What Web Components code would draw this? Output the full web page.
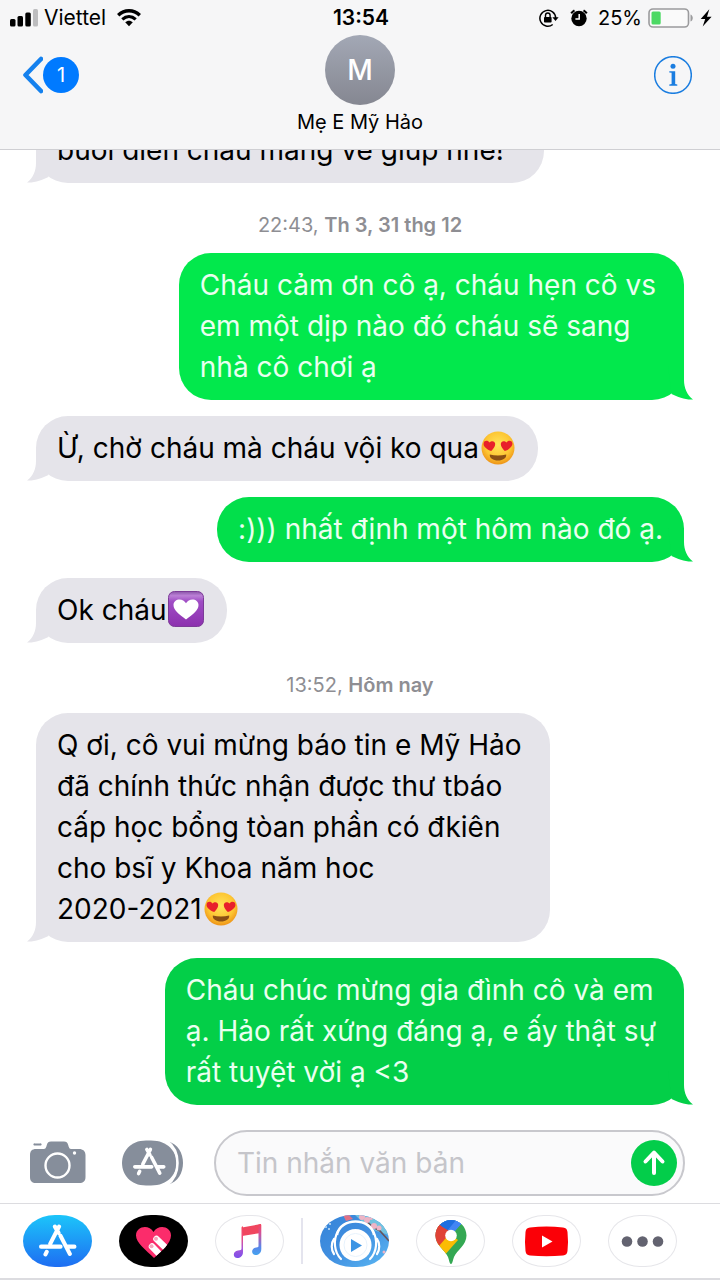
<!DOCTYPE html>
<html lang="vi">
<head>
<meta charset="utf-8">
<meta name="viewport" content="width=device-width, initial-scale=1">
<title>Mẹ E Mỹ Hảo</title>
<style>
  body { margin: 0; background: #fff; font-family: Inter, "Noto Sans", sans-serif; color: #000; }
</style>
</head>
<body>
<chat-app>
  <status-bar slot="top"></status-bar>
  <chat-header slot="top" unread="1" initial="M">Mẹ E Mỹ Hảo</chat-header>

  <message-bubble trail="wide">buổi diễn cháu mang về giúp nhé!</message-bubble>
  <time-stamp>22:43, <b>Th 3, 31 thg 12</b></time-stamp>
  <message-bubble sent tone="fresh" trail="long">Cháu cảm ơn cô ạ, cháu hẹn cô vs<br>em một dịp nào đó cháu sẽ sang<br>nhà cô chơi ạ</message-bubble>
  <message-bubble>Ừ, chờ cháu mà cháu vội ko qua<emoji-icon name="love"></emoji-icon></message-bubble>
  <message-bubble sent tone="mid">:))) nhất định một hôm nào đó ạ.</message-bubble>
  <message-bubble>Ok cháu<emoji-icon name="heart-box"></emoji-icon></message-bubble>
  <time-stamp>13:52, <b>Hôm nay</b></time-stamp>
  <message-bubble trail="long">Q ơi, cô vui mừng báo tin e Mỹ Hảo<br>đã chính thức nhận được thư tbáo<br>cấp học bổng tòan phần có đkiên<br>cho bsĩ y Khoa năm hoc<br>2020-2021<emoji-icon name="love"></emoji-icon></message-bubble>
  <message-bubble sent trail="long">Cháu chúc mừng gia đình cô và em<br>ạ. Hảo rất xứng đáng ạ, e ấy thật sự<br>rất tuyệt vời ạ &lt;3</message-bubble>

  <message-composer slot="bottom"></message-composer>
  <app-strip slot="bottom"></app-strip>
</chat-app>

<script>
const define = (name, html, setup) => {
  const template = document.createElement('template');
  template.innerHTML = html;
  customElements.define(name, class extends HTMLElement {
    constructor() {
      super();
      this.attachShadow({ mode: 'open' }).append(template.content.cloneNode(true));
    }
    connectedCallback() { if (setup) setup(this, this.shadowRoot); }
  });
};

define('chat-app', `
  <style>
    :host { display: flex; flex-direction: column; height: 100vh; }
    header { flex: none; background: #f6f6f7; border-bottom: 1px solid #cfcfd3; }
    main { flex: 1; min-height: 0; overflow: hidden; display: flex; flex-direction: column; justify-content: flex-end; gap: 16px; padding: 0 36px; }
    footer { flex: none; }
  </style>
  <header><slot name="top"></slot></header>
  <main><slot></slot></main>
  <footer><slot name="bottom"></slot></footer>
`);

define('status-bar', `
  <style>
    :host { display: grid; grid-template-columns: 1fr auto 1fr; align-items: center; height: 36px; margin-bottom: -1px; padding: 0 8px 0 10px; font-size: 20px; line-height: 24px; }
    div { display: flex; align-items: center; }
    .left { gap: 6px; }
    .left span { font-size: 21px; }
    .right { justify-content: flex-end; gap: 6px; }
    .wifi { margin-left: 5px; }
    .alarm { margin: 0 4px 0 5px; }
    time { font-size: 21px; font-weight: 600; }
    svg { display: block; flex: none; }
  </style>
  <div class="left">
    <svg width="28" height="18" viewBox="0 0 28 18"><rect y="10" width="5.500" height="7.500" rx="1.500"/><rect x="7.500" y="7" width="5.500" height="10.500" rx="1.500"/><rect x="15.300" y="3.500" width="5.500" height="14" rx="1.500"/><rect x="23" width="5" height="17.500" rx="1.500" fill="#bdbdbf"/></svg>
    <span>Viettel</span>
    <svg class="wifi" width="24" height="18" viewBox="0 0 24 18" fill="none" stroke="#000"><path d="M1.200 6.200C7.500.200 16.500.200 22.800 6.200" stroke-width="3.400"/><path d="M5.300 10.400c4-3.700 9.400-3.700 13.400 0" stroke-width="3.100"/><path d="M8.200 13.300c2.200-2.200 5.400-2.200 7.600 0L12 17.200z" fill="#000" stroke="none"/></svg>
  </div>
  <time>13:54</time>
  <div class="right">
    <svg width="20" height="18" viewBox="0 0 20 18"><path d="M13.700 15.500A7.900 7.900 0 1 1 16.700 9" fill="none" stroke="#000" stroke-width="1.500"/><path d="M13.400 8.200h6.200l-3.100 3.900z"/><rect x="5" y="8" width="7.600" height="5.600" rx=".8"/><path d="M6.500 8.500V6.300a2.300 2.300 0 0 1 4.600 0v2.200" fill="none" stroke="#000" stroke-width="1.400"/></svg>
    <svg class="alarm" width="18" height="18" viewBox="0 0 18 18"><circle cx="9" cy="9.500" r="7.700"/><path d="M1.200 4.400A10 10 0 0 1 4.500 1.300M16.800 4.400a10 10 0 0 0-3.300-3.100" fill="none" stroke="#000" stroke-width="2"/><path d="M9.200 5v5H5.400" fill="none" stroke="#fff" stroke-width="1.500"/></svg>
    <span>25%</span>
    <svg width="46" height="20" viewBox="0 0 46 20"><rect x="1" y="1" width="39.500" height="18" rx="4" fill="#fafafa" stroke="#9b9b9d" stroke-width="1.600"/><rect x="3.500" y="3.500" width="9.200" height="13" rx="1.500" fill="#4cd964"/><path d="M42.500 6.500c3 1 3 6 0 7z" fill="#9b9b9d"/></svg>
    <svg width="12" height="18" viewBox="0 0 12 18"><path d="M9.300.300L.700 9.900h4.500L2.700 17.600 11.600 7.700H7z"/></svg>
  </div>
`);

define('chat-header', `
  <style>
    :host { display: grid; grid-template-columns: 1fr auto 1fr; height: 114px; padding: 0 22px; }
    button { all: unset; height: 80px; display: flex; align-items: center; color: #0a7aff; cursor: pointer; }
    .info { justify-self: end; padding-right: 6px; }
    .badge { width: 36px; height: 36px; border-radius: 50%; background: #007aff; color: #fff; font-size: 20px; line-height: 36px; text-align: center; }
    .who { display: flex; flex-direction: column; align-items: center; }
    .avatar { width: 70px; height: 70px; border-radius: 50%; background: linear-gradient(#a3a8b5, #858791); color: #fff; font-size: 28px; font-weight: 500; line-height: 71px; text-align: center; }
    h1 { margin: 4px 0 0; font-size: 20px; font-weight: 400; line-height: 27px; }
    svg { display: block; }
  </style>
  <button type="button" aria-label="Quay lại">
    <svg width="21" height="38" viewBox="0 0 21 38"><path d="M19 3L3.500 19 19 35" fill="none" stroke="#1581ee" stroke-width="4.600" stroke-linecap="round" stroke-linejoin="round"/></svg>
    <span class="badge"></span>
  </button>
  <div class="who"><div class="avatar"></div><h1><slot></slot></h1></div>
  <button type="button" class="info" aria-label="Chi tiết">
    <svg width="38" height="38" viewBox="0 0 38 38"><circle cx="19" cy="19" r="18.300" fill="none" stroke="#1a7de0" stroke-width="1.500"/><circle cx="19" cy="10.300" r="2.500" fill="#1a7de0"/><path d="M15.300 15.200h5.900v12.700l2.100.500v1.400h-8v-1.400l2.300-.500V16.800l-2.300-.300z" fill="#1a7de0"/></svg>
  </button>
`, (host, root) => {
  root.querySelector('.badge').textContent = host.getAttribute('unread');
  root.querySelector('.avatar').textContent = host.getAttribute('initial');
});

define('time-stamp', `
  <style>
    :host { display: block; flex: none; padding: 15px 0 1px; text-align: center; color: #8e8e93; font-size: 20px; line-height: 22px; }
    ::slotted(b) { font-weight: 600; }
  </style>
  <slot></slot>
`);

define('message-bubble', `
  <style>
    :host { --fill: #e5e4ea; position: relative; flex: none; align-self: flex-start; padding: 12px 21px; border-radius: 32px; background: var(--fill); font-size: 28px; line-height: 41px; white-space: nowrap; }
    :host([sent]) { --fill: #03cf48; align-self: flex-end; color: #eafff0; }
    :host([tone="mid"]) { --fill: #02df4b; }
    :host([tone="fresh"]) { --fill: #02e84c; }
    :host([trail="long"]) { padding-right: 28px; }
    :host([trail="wide"]) { padding-right: 40px; }
    svg { position: absolute; left: -9px; bottom: 0; fill: var(--fill); }
    :host([sent]) svg { left: auto; right: -9px; transform: scaleX(-1); }
  </style>
  <slot></slot>
  <svg width="26" height="34" viewBox="0 0 26 34" aria-hidden="true"><path d="M9 0V14C9 22 6 29 0 33.500C8 34 15 31 21.500 28L25 0Z"/></svg>
`);

const EMOJI = {
  love: `<svg width="36" height="34" viewBox="0 0 36 34"><defs><radialGradient id="f" cx=".5" cy=".4" r=".6"><stop offset="0" stop-color="#ffe45a"/><stop offset=".65" stop-color="#fdc633"/><stop offset="1" stop-color="#ee9418"/></radialGradient></defs><circle cx="19" cy="17" r="16.500" fill="url(#f)"/><path d="M12.200 20C8 18.500 4 15.500 4.600 12.200c.6-3 4.400-3.200 5.900-.6 2-2.300 5.700-1.600 5.700 1.500 0 2.600-2.100 5-4 6.900z" fill="#e8202b"/><path d="M25.800 20c4.200-1.500 8.200-4.500 7.600-7.800-.6-3-4.400-3.200-5.900-.6-2-2.300-5.700-1.600-5.700 1.500 0 2.600 2.100 5 4 6.900z" fill="#e8202b"/><path d="M10.800 23.500c5 1.300 11.400 1.300 16.400 0 .5 3.500-3.300 6-8.200 6s-8.700-2.500-8.200-6z" fill="#8a4f14"/></svg>`,
  'heart-box': `<svg width="38" height="36" viewBox="1 0 38 36"><defs><linearGradient id="b" x2="0" y2="1"><stop offset="0" stop-color="#8a55a8"/><stop offset=".12" stop-color="#bb80d6"/><stop offset=".28" stop-color="#a04dc5"/><stop offset="1" stop-color="#8c30ae"/></linearGradient></defs><rect x="3.500" y=".5" width="35" height="35" rx="6" fill="url(#b)" stroke="#7c3b98"/><path d="M21 28.500C14 23 8.500 19.500 8.500 14c0-6.500 9.500-7.700 12.500-1.700 3-6 12.500-4.800 12.500 1.700 0 5.500-5.500 9-12.500 14.500z" fill="#fff"/></svg>`
};
define('emoji-icon', `
  <style>
    :host { display: inline-block; vertical-align: -7px; line-height: 0; margin-right: 2px; }
    svg { display: block; }
  </style>
`, (host, root) => {
  root.querySelector('style').insertAdjacentHTML('afterend', EMOJI[host.getAttribute('name')]);
});

/* The crossed-sticks mark shared by the drawer button and the store tile. */
const STORE = `<g fill="none" stroke="#fff" stroke-linecap="round" stroke-width="4"><path d="M19.500 2.500L11 19M15.500 2.500L19 8.500M21 11.500l9 17.500M2 22h19M27 22h7.500M7.500 27l-1.200 2.500" /></g>`;

define('message-composer', `
  <style>
    :host { display: block; }
    form { display: flex; align-items: center; margin: 0; padding: 25px 35px 7px 29px; }
    button { all: unset; cursor: pointer; flex: none; }
    svg { display: block; }
    .drawer { margin: 0 30px 0 36px; }
    .field { flex: 1; min-width: 0; display: flex; align-items: center; box-sizing: border-box; height: 66px; border: 2px solid #c8c8cd; border-radius: 33px; background: #fafafb; padding: 0 6px 0 21px; }
    input { all: unset; flex: 1; min-width: 0; font-size: 28px; line-height: 40px; color: #000; }
    input::placeholder { color: #c5c5ca; opacity: 1; }
  </style>
  <form>
    <button type="button" aria-label="Máy ảnh">
      <svg width="57" height="44" viewBox="0 0 57 44"><path d="M6 2.500h5a1 1 0 0 1 1 2H5a1 1 0 0 1 1-2z" fill="#868e9b"/><path d="M7 8h7c3 0 3-1.500 3.800-4C18.700 1.200 19.500.500 22 .500h13c2.500 0 3.300.7 4.200 3.500C40 6.500 40 8 43 8h7c4 0 6.500 2.300 6.500 6v22c0 4-2.200 6-6.200 6H7c-4 0-6-2-6-6V14c0-4 2-6 6-6z" fill="#868e9b"/><circle cx="28.500" cy="24.500" r="12" fill="none" stroke="#fff" stroke-width="2.400"/><circle cx="45.500" cy="12" r="1.700" fill="#fff"/></svg>
    </button>
    <button type="button" class="drawer" aria-label="Ứng dụng">
      <svg width="62" height="46" viewBox="0 0 62 46"><path d="M46 1.500C66 6 66 40 46 44.500 59 34 59 12 46 1.500z" fill="#868e9b"/><path d="M24 .500h5c34 0 34 45 0 45h-5c-32 0-32-45 0-45z" fill="#868e9b"/><path d="M45 1C59 11 59 35 45 45" fill="none" stroke="#fff" stroke-width="2.500"/><svg x="11" y="7" width="33" height="29" viewBox="0 0 37 32">${STORE}</svg></svg>
    </button>
    <div class="field">
      <input type="text" aria-label="Tin nhắn văn bản" placeholder="Tin nhắn văn bản">
      <button type="submit" aria-label="Gửi">
        <svg width="46" height="46" viewBox="0 0 46 46"><circle cx="23" cy="23" r="23" fill="#03cd4a"/><path d="M23 33V13M14.500 21.500L23 12.500l8.500 9" fill="none" stroke="#fff" stroke-width="4" stroke-linecap="round" stroke-linejoin="round"/></svg>
      </button>
    </div>
  </form>
`, (host, root) => {
  root.querySelector('form').addEventListener('submit', e => e.preventDefault());
});

define('app-strip', `
  <style>
    :host { display: block; border-top: 1px solid #dcdce0; border-bottom: 2px solid #dcdce0; }
    nav, div { display: flex; align-items: center; }
    nav { gap: 17px; padding: 11px 23px; }
    div { gap: 27px; }
    hr { width: 2px; height: 46px; margin: 0; border: 0; background: #e4e4ee; }
    button { all: unset; box-sizing: border-box; width: 69px; height: 52px; border-radius: 32px / 26px; overflow: hidden; cursor: pointer; }
    .plain { border: 1px solid #e6e6ea; }
    .plain svg { margin: -1px; }
    svg { display: block; }
  </style>
  <nav aria-label="Ứng dụng tin nhắn">
    <div>
      <button type="button" aria-label="App Store"><svg width="69" height="52" viewBox="0 0 69 52"><defs><linearGradient id="s" x2="0" y2="1"><stop offset="0" stop-color="#1cc5fa"/><stop offset="1" stop-color="#1e6df2"/></linearGradient></defs><rect width="69" height="52" fill="url(#s)"/><svg x="16" y="9" width="38" height="33" viewBox="0 0 37 32">${STORE}</svg></svg></button>
      <button type="button" aria-label="Digital Touch"><svg width="69" height="52" viewBox="0 0 69 52"><defs><clipPath id="c"><path d="M35 43C27 35 17 28 17 20.500 17 11 30 9 34.500 17 39 9 52 11 52 20.500 52 28 43 36 35 43z"/></clipPath></defs><rect width="69" height="52"/><g clip-path="url(#c)"><rect width="69" height="52" fill="#fb2c6b"/><path d="M37.500 24L51 37M33 31.500L45 44" stroke="#fff" stroke-width="6.500" stroke-linecap="round"/><circle cx="37" cy="23.800" r="2" fill="#f4a6bd"/><circle cx="32.500" cy="31.300" r="2" fill="#f4a6bd"/></g></svg></button>
      <button type="button" class="plain" aria-label="Âm nhạc"><svg width="69" height="52" viewBox="0 0 69 52"><defs><linearGradient id="n1" x2="0" y2="1"><stop offset="0" stop-color="#f5445b"/><stop offset=".35" stop-color="#ee4a7c"/><stop offset=".7" stop-color="#a856d8"/><stop offset="1" stop-color="#7b4fea"/></linearGradient><linearGradient id="n2" x2="0" y2="1"><stop offset="0" stop-color="#f5445b"/><stop offset=".3" stop-color="#d4519a"/><stop offset=".75" stop-color="#5886ea"/><stop offset="1" stop-color="#45a4ef"/></linearGradient></defs><path d="M27 12.500L46 9v9L27 21z" fill="#f0465f"/><path d="M26.500 13c0-1 .5-1.500 1.500-1.700V37c0 4-3 6-5.500 6-5 0-5-7 .5-7.500 2.500-.3 3.500-.3 3.500-2z" fill="url(#n1)"/><path d="M43.500 9.500l1.300-.3c1-.2 1.500 0 1.500 1V34c0 4-3 6-5.500 6-5 0-5-7 .5-7.500 2-.3 2.200-.5 2.200-2z" fill="url(#n2)"/></svg></button>
    </div>
    <hr>
    <div>
      <button type="button" aria-label="Trình phát nhạc"><svg width="69" height="52" viewBox="0 0 69 52"><defs><linearGradient id="p" y2="1"><stop offset="0" stop-color="#3584d8"/><stop offset=".5" stop-color="#418fe0"/><stop offset="1" stop-color="#5bb9f4"/></linearGradient></defs><rect width="69" height="52" fill="url(#p)"/><path d="M35 0h34v20L50 14z" fill="#72c3df"/><path d="M23 0h6l4 4-7 2z" fill="#df7186"/><path d="M45 5l8 7 7 4 9 10" fill="none" stroke="#66545d" stroke-width="1.600"/><g fill="#efb4c5"><circle cx="42" cy="2" r="3"/><circle cx="47" cy="5" r="3"/><circle cx="54" cy="11" r="3"/><circle cx="59" cy="13" r="2.500"/><circle cx="51" cy="3" r="2"/><circle cx="64" cy="37" r="1.500"/></g><g fill="#c9e3f7"><circle cx="6" cy="12" r="1"/><circle cx="10" cy="9" r="1"/><circle cx="9" cy="14" r="1"/></g><path d="M17 20C20 2 51 2 54 20" fill="none" stroke="#fff" stroke-width="2.500"/><circle cx="35.500" cy="30" r="16" fill="#fff"/><circle cx="35.500" cy="30" r="11.500" fill="none" stroke="#e7f2fc"/><path d="M31 24l11 6.500L31 37z" fill="#3d95e4"/><path d="M18 16c-5 9-4 21 3 28M53 16c5 9 4 21-3 28M14 24c-3 4-3 11 0 15M57 24c3 4 3 11 0 15" fill="none" stroke="#fff" stroke-width="2.200" stroke-linecap="round"/></svg></button>
      <button type="button" class="plain" aria-label="Bản đồ"><svg width="69" height="52" viewBox="0 0 69 52"><defs><clipPath id="m"><path d="M35 49c-1.500 0-1.500-3-3-7-3-7-12.500-12-12.500-21.500C19.500 12 26.500 5 35 5s15.500 7 15.500 15.500C50.500 30 41 35 38 42c-1.500 4-1.500 7-3 7z"/></clipPath></defs><g clip-path="url(#m)"><rect width="69" height="52" fill="#34a853"/><path d="M35 20.500L60-8H35L20 6z" fill="#4a89f3"/><path d="M35 20.500L44 0H18l5 10z" fill="#1f6fe0"/><path d="M35 20L46 8l-5-4-10 12z" fill="#4285f4"/><path d="M35 20.500L23 9 10 10v27z" fill="#e04236"/><path d="M42 25L27 42 17 32l12-17z" fill="#fbbc04"/><path d="M35 17L23 31 10 36V8l13 2z" fill="#e04236"/></g><circle cx="35" cy="20.500" r="5.800" fill="#fff"/></svg></button>
      <button type="button" class="plain" aria-label="YouTube"><svg width="69" height="52" viewBox="0 0 69 52"><path d="M18 12.500q16.500-2 33 0c3 .3 4 1.500 4.500 4.500q1 9.500 0 19c-.5 3-1.500 4-4.500 4.500q-16.500 1.500-33 0c-3-.5-4-1.500-4.500-4.500q-1-9.500 0-19c.5-3 1.500-4.200 4.500-4.500z" fill="#fb0007"/><path d="M30 20.500v12l10.500-6z" fill="#fff"/></svg></button>
      <button type="button" class="plain" aria-label="Thêm"><svg width="69" height="52" viewBox="0 0 69 52" fill="#636370"><circle cx="19" cy="26.500" r="5.300"/><circle cx="34.500" cy="26.500" r="5.300"/><circle cx="50" cy="26.500" r="5.300"/></svg></button>
    </div>
  </nav>
`);
</script>
</body>
</html>
